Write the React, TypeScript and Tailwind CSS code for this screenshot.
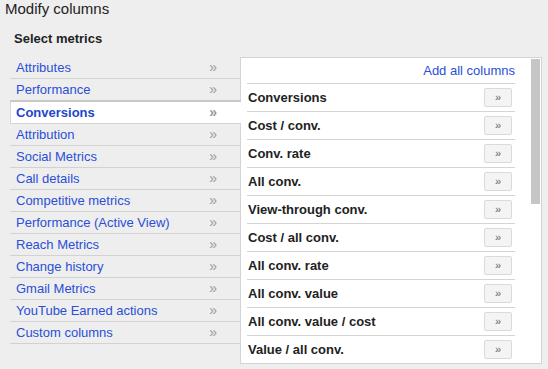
import React from "react";

const categories = [
    "Attributes",
    "Performance",
    "Conversions",
    "Attribution",
    "Social Metrics",
    "Call details",
    "Competitive metrics",
    "Performance (Active View)",
    "Reach Metrics",
    "Change history",
    "Gmail Metrics",
    "YouTube Earned actions",
    "Custom columns",
];

const metrics = [
    "Conversions",
    "Cost / conv.",
    "Conv. rate",
    "All conv.",
    "View-through conv.",
    "Cost / all conv.",
    "All conv. rate",
    "All conv. value",
    "All conv. value / cost",
    "Value / all conv.",
];

const selected = "Conversions";

export default function App() {
    return (
        <div
            className="min-h-screen w-full bg-[#eeeeee] text-[#222]"
            style={{fontFamily: '"Liberation Sans", Arial, sans-serif'}}
        >
            <div className="pl-[5px] text-[15px] leading-[18px]">Modify columns</div>
            <div className="mt-[13px] pl-[14px] text-[13px] font-bold leading-4">Select metrics</div>

            <div className="mt-[10px] flex items-start pl-[10px]">
                {/* category list */}
                <div className="flex w-[230px] flex-col">
                    {categories.map((c) => {
                        const active = c === selected;
                        return (
                            <div
                                key={c}
                                className={
                                    active
                                        ? "relative z-10 -mr-px -mt-px flex h-[24px] items-center border-t-2 border-b border-l border-t-[#c8c8c8] border-b-[#d6d6d6] border-l-[#d6d6d6] bg-white text-[13px] font-bold text-[#2246cc]"
                                        : "flex h-[22px] items-center border-b border-[#d2d2d2] text-[13px] text-[#2a4fd8]"
                                }
                            >
                                <span className={active ? "flex-1 pl-[5px]" : "flex-1 pl-[6px]"}>{c}</span>
                                <span className={active ? "mr-[24px] text-[14px] text-[#999]" : "mr-[23px] text-[14px] text-[#999]"}>»</span>
                            </div>
                        );
                    })}
                </div>

                {/* metrics panel */}
                <div className="flex w-[302px] border border-[#d4d4d4] bg-white">
                    <div className="w-[274px] pl-[6px]">
                        <div className="flex h-[25px] items-center justify-end text-[13px] text-[#2a4fd8]">Add all columns</div>
                        {metrics.map((m) => (
                            <div key={m} className="flex h-[28px] items-center justify-between border-t border-[#d4d4d4]">
                                <span className="pl-[1px] text-[13px] font-bold text-[#222]">{m}</span>
                                <button className="mr-[3px] flex h-[19px] w-[28px] items-center justify-center rounded-[2px] border border-[#dadada] bg-[#f4f4f4] text-[11px] text-[#666]">
                                    »
                                </button>
                            </div>
                        ))}
                    </div>
                    <div className="ml-[16px] w-[9px] pt-[1px]">
                        <div className="h-[145px] w-full bg-[#c6c6c6]" />
                    </div>
                </div>
            </div>
        </div>
    );
}
